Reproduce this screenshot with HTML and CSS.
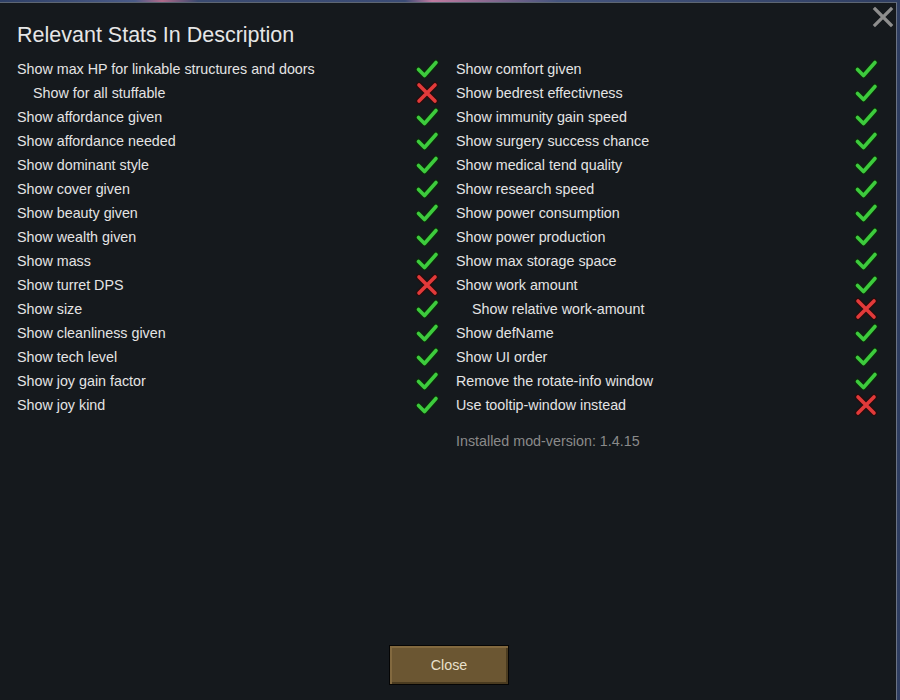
FILE: index.html
```html
<!DOCTYPE html>
<html>
<head>
<meta charset="utf-8">
<link rel="stylesheet" href="styles.css">
</head>
<body>
<svg width="0" height="0" class="defs">
  <defs>
    <g id="yes">
      <path d="M3.5 12.5 L9.5 18.5 L21 5.5" fill="none" stroke="#0c2a0c" stroke-width="6" stroke-linecap="round" stroke-linejoin="round"/>
      <path d="M3.5 12.5 L9.5 18.5 L21 5.5" fill="none" stroke="#3dcb3d" stroke-width="3.6" stroke-linecap="round" stroke-linejoin="round"/>
    </g>
    <g id="no">
      <path d="M4 4 L20 20 M20 4 L4 20" fill="none" stroke="#2a0c0c" stroke-width="6" stroke-linecap="round"/>
      <path d="M4 4 L20 20 M20 4 L4 20" fill="none" stroke="#e23a3a" stroke-width="3.6" stroke-linecap="round"/>
    </g>
  </defs>
</svg>
<div class="window">
  <svg class="close-x" width="22" height="22" viewBox="0 0 22 22"><path d="M3 3 L19 19 M19 3 L3 19" stroke="#8e8e8e" stroke-width="3.2" stroke-linecap="square"/></svg>
  <h1 class="title">Relevant Stats In Description</h1>
  <div class="columns">
    <div class="col">
      <div class="row"><span>Show max HP for linkable structures and doors</span><svg class="ic" viewBox="0 0 24 24"><use href="#yes"/></svg></div>
      <div class="row sub"><span>Show for all stuffable</span><svg class="ic" viewBox="0 0 24 24"><use href="#no"/></svg></div>
      <div class="row"><span>Show affordance given</span><svg class="ic" viewBox="0 0 24 24"><use href="#yes"/></svg></div>
      <div class="row"><span>Show affordance needed</span><svg class="ic" viewBox="0 0 24 24"><use href="#yes"/></svg></div>
      <div class="row"><span>Show dominant style</span><svg class="ic" viewBox="0 0 24 24"><use href="#yes"/></svg></div>
      <div class="row"><span>Show cover given</span><svg class="ic" viewBox="0 0 24 24"><use href="#yes"/></svg></div>
      <div class="row"><span>Show beauty given</span><svg class="ic" viewBox="0 0 24 24"><use href="#yes"/></svg></div>
      <div class="row"><span>Show wealth given</span><svg class="ic" viewBox="0 0 24 24"><use href="#yes"/></svg></div>
      <div class="row"><span>Show mass</span><svg class="ic" viewBox="0 0 24 24"><use href="#yes"/></svg></div>
      <div class="row"><span>Show turret DPS</span><svg class="ic" viewBox="0 0 24 24"><use href="#no"/></svg></div>
      <div class="row"><span>Show size</span><svg class="ic" viewBox="0 0 24 24"><use href="#yes"/></svg></div>
      <div class="row"><span>Show cleanliness given</span><svg class="ic" viewBox="0 0 24 24"><use href="#yes"/></svg></div>
      <div class="row"><span>Show tech level</span><svg class="ic" viewBox="0 0 24 24"><use href="#yes"/></svg></div>
      <div class="row"><span>Show joy gain factor</span><svg class="ic" viewBox="0 0 24 24"><use href="#yes"/></svg></div>
      <div class="row"><span>Show joy kind</span><svg class="ic" viewBox="0 0 24 24"><use href="#yes"/></svg></div>
    </div>
    <div class="col">
      <div class="row"><span>Show comfort given</span><svg class="ic" viewBox="0 0 24 24"><use href="#yes"/></svg></div>
      <div class="row"><span>Show bedrest effectivness</span><svg class="ic" viewBox="0 0 24 24"><use href="#yes"/></svg></div>
      <div class="row"><span>Show immunity gain speed</span><svg class="ic" viewBox="0 0 24 24"><use href="#yes"/></svg></div>
      <div class="row"><span>Show surgery success chance</span><svg class="ic" viewBox="0 0 24 24"><use href="#yes"/></svg></div>
      <div class="row"><span>Show medical tend quality</span><svg class="ic" viewBox="0 0 24 24"><use href="#yes"/></svg></div>
      <div class="row"><span>Show research speed</span><svg class="ic" viewBox="0 0 24 24"><use href="#yes"/></svg></div>
      <div class="row"><span>Show power consumption</span><svg class="ic" viewBox="0 0 24 24"><use href="#yes"/></svg></div>
      <div class="row"><span>Show power production</span><svg class="ic" viewBox="0 0 24 24"><use href="#yes"/></svg></div>
      <div class="row"><span>Show max storage space</span><svg class="ic" viewBox="0 0 24 24"><use href="#yes"/></svg></div>
      <div class="row"><span>Show work amount</span><svg class="ic" viewBox="0 0 24 24"><use href="#yes"/></svg></div>
      <div class="row sub"><span>Show relative work-amount</span><svg class="ic" viewBox="0 0 24 24"><use href="#no"/></svg></div>
      <div class="row"><span>Show defName</span><svg class="ic" viewBox="0 0 24 24"><use href="#yes"/></svg></div>
      <div class="row"><span>Show UI order</span><svg class="ic" viewBox="0 0 24 24"><use href="#yes"/></svg></div>
      <div class="row"><span>Remove the rotate-info window</span><svg class="ic" viewBox="0 0 24 24"><use href="#yes"/></svg></div>
      <div class="row"><span>Use tooltip-window instead</span><svg class="ic" viewBox="0 0 24 24"><use href="#no"/></svg></div>
      <div class="row version"><span>Installed mod-version: 1.4.15</span></div>
    </div>
  </div>
  <div class="footer">
    <button class="close-btn">Close</button>
  </div>
</div>
</body>
</html>
```

FILE: styles.css
```css
html, body {
  margin: 0;
  padding: 0;
  height: 700px;
  overflow: hidden;
}
body {
  background: linear-gradient(90deg, #2e3f66 0%, #4a5b88 15%, #b06a8a 18%, #3a4a70 22%, #3b4c76 45%, #c07aa0 48%, #45557e 62%, #2f3e62 100%);
  font-family: "Liberation Sans", Arial, sans-serif;
  padding-top: 2px;
  box-sizing: border-box;
}
.defs {
  position: absolute;
  width: 0;
  height: 0;
}
.window {
  position: relative;
  width: 897px;
  height: 698px;
  box-sizing: border-box;
  background: #15191d;
  border-top: 1px solid #5d6673;
  border-right: 1px solid #6a7383;
  padding: 0 18px 15px 17px;
  display: flex;
  flex-direction: column;
  color: #e4e4e4;
}
.close-x {
  position: absolute;
  top: 3px;
  right: 2px;
}
.title {
  margin: 18px 0 8px 0;
  font-size: 21.5px;
  line-height: 28px;
  font-weight: normal;
  color: #e6e6e6;
}
.columns {
  display: grid;
  grid-template-columns: 423px 423px;
  column-gap: 16px;
}
.row {
  height: 24px;
  display: flex;
  align-items: center;
  justify-content: space-between;
  font-size: 14.3px;
  line-height: 24px;
  color: #e4e4e4;
}
.row.sub {
  padding-left: 16px;
}
.row.version {
  color: #8a8a8a;
  margin-top: 12px;
}
.ic {
  width: 24px;
  height: 24px;
  flex: none;
  margin-right: 1px;
}
.footer {
  margin-top: auto;
  display: flex;
  justify-content: center;
  padding-left: 3px;
}
.close-btn {
  width: 120px;
  height: 40px;
  border: 1px solid #050505;
  background: #6b5632;
  box-shadow: inset 2px 2px 0 #82693f, inset -2px -2px 0 #4a3b20;
  color: #e9e0cc;
  font-family: "Liberation Sans", Arial, sans-serif;
  font-size: 14.3px;
  padding: 0;
}
```
